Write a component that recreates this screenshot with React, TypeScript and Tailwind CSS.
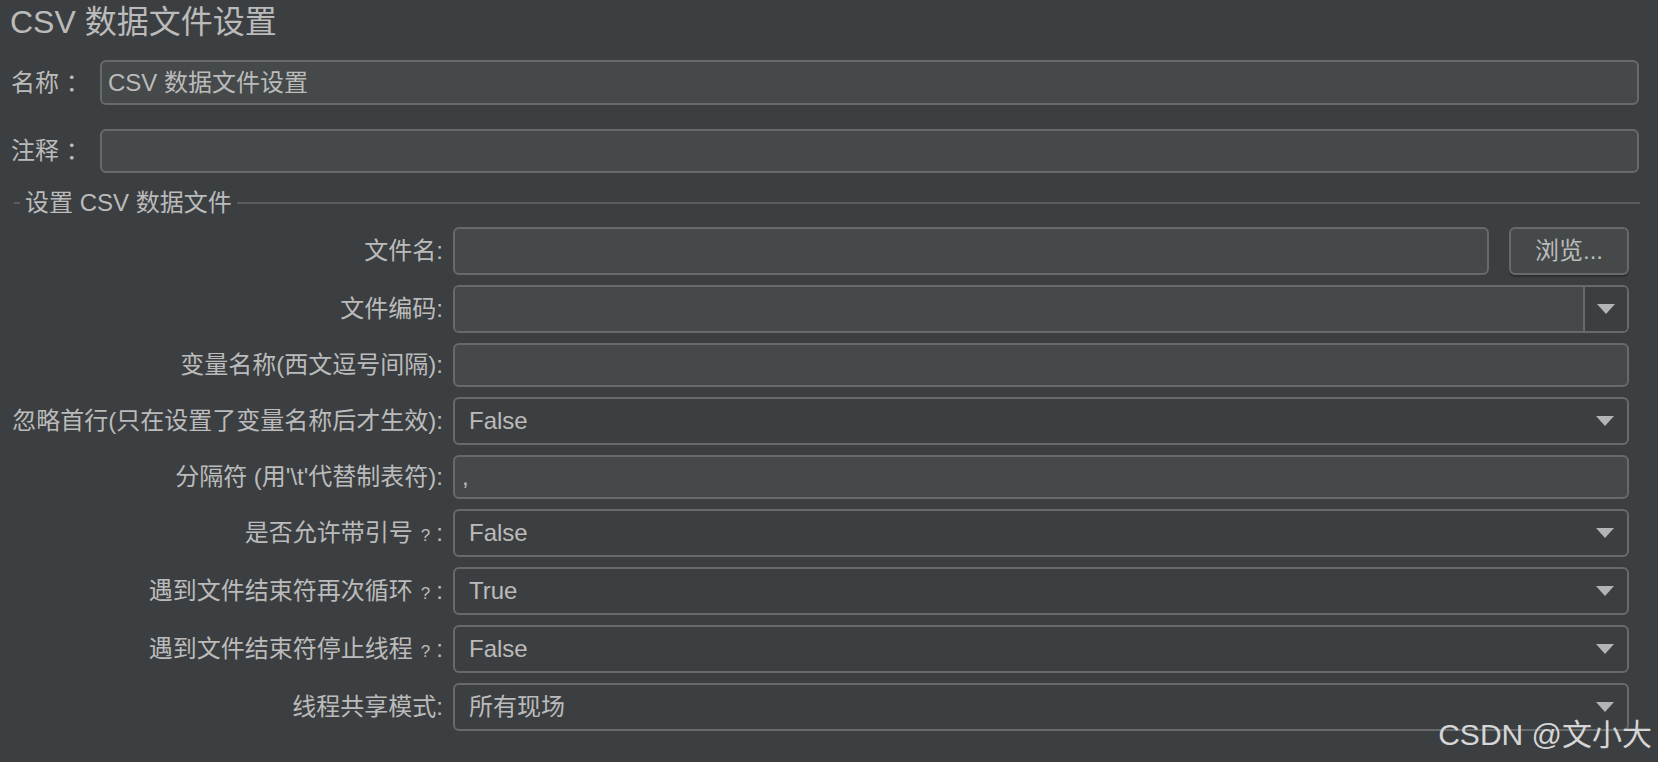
import React from 'react';

const font = { fontFamily: '"Liberation Sans", "Noto Sans CJK SC", sans-serif' };

const Arrow = () => (
  <svg width="18" height="10" viewBox="0 0 18 10" className="shrink-0">
    <polygon points="0,0 18,0 9,10" fill="#b4b4b4" />
  </svg>
);

const Help = () => <span className="text-[17px] ml-[8px] mr-[6px]">?</span>;

type Row =
  | { label: React.ReactNode; kind: 'text'; value?: string; h: string }
  | { label: React.ReactNode; kind: 'select'; value: string }
  | { label: React.ReactNode; kind: 'file' }
  | { label: React.ReactNode; kind: 'combo' };

const rows: Row[] = [
  { label: '文件名:', kind: 'file' },
  { label: '文件编码:', kind: 'combo' },
  { label: '变量名称(西文逗号间隔):', kind: 'text', h: 'h-[44px]' },
  { label: '忽略首行(只在设置了变量名称后才生效):', kind: 'select', value: 'False' },
  { label: "分隔符 (用'\\t'代替制表符):", kind: 'text', value: ',', h: 'h-[44px]' },
  { label: <>是否允许带引号<Help />:</>, kind: 'select', value: 'False' },
  { label: <>遇到文件结束符再次循环<Help />:</>, kind: 'select', value: 'True' },
  { label: <>遇到文件结束符停止线程<Help />:</>, kind: 'select', value: 'False' },
  { label: '线程共享模式:', kind: 'select', value: '所有现场' },
];

const Control = ({ row }: { row: Row }) => {
  if (row.kind === 'file') {
    return (
      <div className="flex-1 flex gap-[20px] h-[48px]">
        <div className="flex-1 border-2 border-[#67696b] rounded-[6px] bg-[#45494a]" />
        <button className="w-[120px] border-2 border-[#67696b] rounded-[6px] bg-[#45494a] text-[#bbbbbb] text-[24px] shadow-[0_2px_1px_rgba(0,0,0,0.25)]">
          浏览...
        </button>
      </div>
    );
  }
  if (row.kind === 'combo') {
    return (
      <div className="flex-1 flex h-[48px] border-2 border-[#67696b] rounded-[6px] overflow-hidden">
        <div className="flex-1 bg-[#45494a]" />
        <div className="w-[44px] border-l-2 border-[#67696b] bg-[#3c3f41] flex items-center justify-center">
          <Arrow />
        </div>
      </div>
    );
  }
  if (row.kind === 'select') {
    return (
      <div className="flex-1 flex items-center h-[48px] border-2 border-[#67696b] rounded-[6px] pl-[14px] pr-[13px]">
        <span className="flex-1">{row.value}</span>
        <Arrow />
      </div>
    );
  }
  return (
    <div className={`flex-1 flex items-center ${row.h} border-2 border-[#67696b] rounded-[6px] bg-[#45494a] pl-[7px]`}>
      {row.value}
    </div>
  );
};

export default function App() {
  return (
    <div style={font} className="relative w-full h-[762px] overflow-hidden bg-[#3c3f41] text-[#bbbbbb] text-[24px]">
      <div className="h-[44px] flex items-center pl-[10px] text-[32px]">CSV 数据文件设置</div>

      <div className="mt-[16px] flex items-center pl-[11px] pr-[19px]">
        <span className="w-[89px]">名称 ：</span>
        <div className="flex-1 h-[45px] flex items-center border-2 border-[#67696b] rounded-[6px] bg-[#45494a] pl-[6px]">
          CSV 数据文件设置
        </div>
      </div>

      <div className="mt-[24px] flex items-center pl-[11px] pr-[19px]">
        <span className="w-[89px]">注释 ：</span>
        <div className="flex-1 h-[44px] border-2 border-[#67696b] rounded-[6px] bg-[#45494a]" />
      </div>

      <div className="mt-[18px] h-[24px] flex items-center pr-[18px]">
        <div className="ml-[14px] w-[6px] h-[2px] bg-[#5a5d5f]" />
        <span className="mx-[5px] leading-none">设置 CSV 数据文件</span>
        <div className="flex-1 h-[2px] bg-[#5a5d5f]" />
      </div>

      <div className="mt-[12px] flex flex-col gap-[10px] pr-[29px]">
        {rows.map((row, i) => (
          <div key={i} className="flex items-center">
            <div className="w-[443px] text-right whitespace-nowrap">{row.label}</div>
            <div className="ml-[10px] flex-1 flex">
              <Control row={row} />
            </div>
          </div>
        ))}
      </div>

      <div className="absolute right-[6px] bottom-[12px] text-[30px] leading-none text-[#d6d6d6]">
        CSDN @文小大
      </div>
    </div>
  );
}
